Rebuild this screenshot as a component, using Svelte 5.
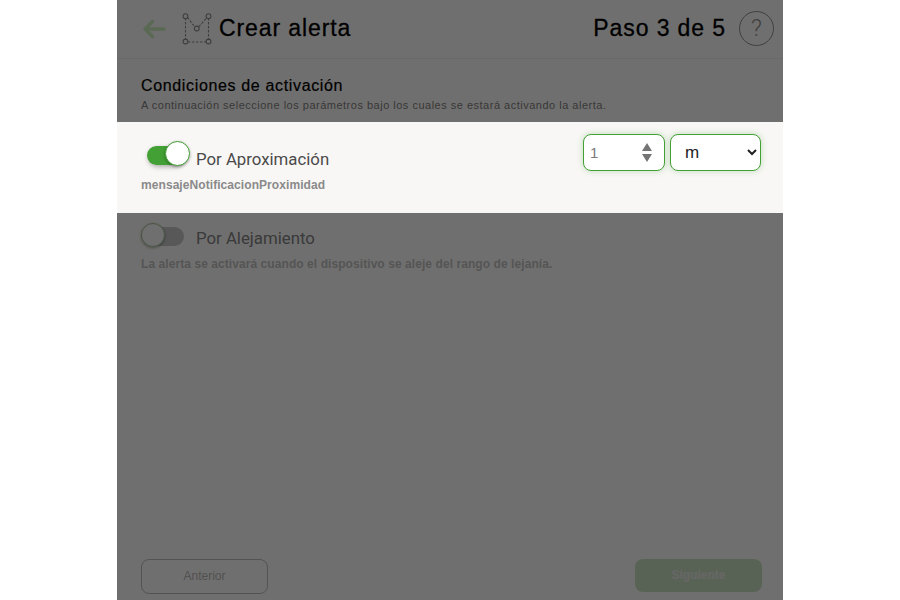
<script lang="ts">
  let distance = $state("1");
  let unit = $state("m");
</script>

<div class="page">
  <div class="screen">
    <header class="topbar">
      <div class="topbar-left">
        <svg class="back" width="26" height="22" viewBox="0 0 26 22" fill="none" stroke="#c6e8ba" stroke-width="3.4" stroke-linecap="round" stroke-linejoin="round">
          <path d="M23 11H4M11.5 3.5 4 11l7.5 7.5" />
        </svg>
        <svg class="logo" width="32" height="32" viewBox="0 0 32 32" fill="none" stroke="#8a8a8a" stroke-width="1.1">
          <path d="M3.5 5v22M26.5 5v22M6 29h18" stroke-dasharray="2.4 1.6" />
          <path d="M5.5 4.5 12.5 13.5M17 13.5 25 4.5" stroke-dasharray="2.4 1.6" />
          <circle cx="3.5" cy="3.2" r="2.4" />
          <circle cx="26.5" cy="3.2" r="2.4" />
          <circle cx="14.8" cy="15.5" r="2.4" />
          <circle cx="3.5" cy="28.5" r="2.4" />
          <circle cx="26.5" cy="28.5" r="2.4" />
        </svg>
        <h1>Crear alerta</h1>
      </div>
      <div class="topbar-right">
        <span class="step">Paso 3 de 5</span>
        <span class="help">?</span>
      </div>
    </header>

    <section class="intro">
      <h2>Condiciones de activación</h2>
      <p>A continuación seleccione los parámetros bajo los cuales se estará activando la alerta.</p>
    </section>

    <section class="option active">
      <div class="option-main">
        <div class="option-title">
          <span class="toggle on"><span class="knob"></span></span>
          <span class="label">Por Aproximación</span>
        </div>
        <p class="hint">mensajeNotificacionProximidad</p>
      </div>
      <div class="controls">
        <div class="number">
          <input type="text" bind:value={distance} />
          <span class="arrows"><i class="up"></i><i class="down"></i></span>
        </div>
        <select bind:value={unit}>
          <option value="m">m</option>
          <option value="km">km</option>
        </select>
      </div>
    </section>

    <section class="option second">
      <div class="option-title">
        <span class="toggle"><span class="knob"></span></span>
        <span class="label">Por Alejamiento</span>
      </div>
      <p class="hint">La alerta se activará cuando el dispositivo se aleje del rango de lejanía.</p>
    </section>

    <footer class="actions">
      <button class="btn prev">Anterior</button>
      <button class="btn next">Siguiente</button>
    </footer>

    <div class="overlay"></div>
  </div>
</div>

<style>
  :global(body) {
    background: #fff;
    font-family: "Liberation Sans", Arial, sans-serif;
  }

  .page {
    display: flex;
    justify-content: center;
  }

  .screen {
    position: relative;
    width: 666px;
    height: 600px;
    display: flex;
    flex-direction: column;
    background: #f8f7f5;
    overflow: hidden;
  }

  .overlay {
    position: absolute;
    inset: 0;
    background: rgba(0, 0, 0, 0.55);
    z-index: 1;
  }

  .topbar {
    height: 59px;
    flex-shrink: 0;
    box-sizing: border-box;
    border-bottom: 1px solid #e8e8e6;
    display: flex;
    justify-content: space-between;
    align-items: center;
    padding: 0 9px 1px 24px;
  }

  .topbar-left,
  .topbar-right {
    display: flex;
    align-items: center;
  }

  .back {
    margin-right: 15px;
  }

  .logo {
    margin-right: 5px;
  }

  h1 {
    margin: 0;
    font-size: 23px;
    font-weight: 400;
    letter-spacing: 0.9px;
    color: #000;
    -webkit-text-stroke: 0.3px #000;
  }

  .step {
    font-size: 23px;
    letter-spacing: 0.9px;
    color: #000;
    -webkit-text-stroke: 0.3px #000;
    margin-right: 13px;
  }

  .help {
    width: 33px;
    height: 33px;
    border: 1.5px solid #8c8c8c;
    border-radius: 50%;
    color: #909090;
    font-family: Roboto, "Liberation Sans", sans-serif;
    font-weight: 300;
    font-size: 24px;
    line-height: 33px;
    text-align: center;
  }

  .intro {
    height: 63px;
    box-sizing: border-box;
    padding: 18px 24px 0;
  }

  .intro h2 {
    margin: 0;
    font-size: 16px;
    font-weight: 400;
    letter-spacing: 0.65px;
    color: #000;
    -webkit-text-stroke: 0.2px #000;
  }

  .intro p {
    margin: 4px 0 0;
    font-size: 11px;
    letter-spacing: 0.5px;
    color: #7c7c7c;
  }

  .option {
    padding: 0 24px;
  }

  .active {
    position: relative;
    z-index: 2;
    height: 91px;
    box-sizing: border-box;
    background: #f8f7f5;
    display: flex;
    justify-content: space-between;
    padding: 12px 22px 0 24px;
  }

  .option-main {
    padding-top: 8px;
  }

  .option-title {
    display: flex;
    align-items: center;
  }

  .toggle {
    position: relative;
    display: block;
    flex-shrink: 0;
    width: 37px;
    height: 19px;
    margin-left: 6px;
    margin-right: 12px;
    border-radius: 10px;
    background: #c4c4c4;
  }

  .toggle.on {
    background: #43a035;
    box-shadow: 1px 2px 5px rgba(0, 0, 0, 0.3);
  }

  .knob {
    position: absolute;
    top: -4px;
    left: -6px;
    width: 24px;
    height: 24px;
    box-sizing: border-box;
    border-radius: 50%;
    background: #f8f7f5;
    border: 1.5px solid #9fc095;
    box-shadow: 0 1px 3px rgba(0, 0, 0, 0.3);
  }

  .on .knob {
    left: auto;
    right: -6px;
    top: -5px;
    width: 25px;
    height: 25px;
    background: #fff;
    border: 1px solid #43a035;
    box-shadow: 0 1px 3px rgba(0, 0, 0, 0.35);
  }

  .label {
    font-family: Roboto, "Liberation Sans", sans-serif;
    font-size: 16.8px;
    color: #4a4a4a;
    margin-top: 7px;
  }

  .second .label {
    color: #808080;
    margin-top: 4px;
  }

  .hint {
    margin: 9px 0 0;
    font-size: 12px;
    font-weight: 700;
    letter-spacing: 0.07px;
    color: #8a8a8a;
  }

  .second {
    padding-top: 11px;
  }

  .second .hint {
    margin-top: 9px;
    color: #bcbcbc;
  }

  .controls {
    display: flex;
    gap: 5px;
    align-self: flex-start;
  }

  .number,
  select {
    height: 37px;
    box-sizing: border-box;
    border: 1px solid #43a035;
    border-radius: 8px;
    background: #fff;
    box-shadow: 0 0 6px rgba(67, 160, 53, 0.3);
  }

  .number {
    width: 82px;
    display: flex;
    align-items: center;
    justify-content: space-between;
    padding: 0 12px 0 6px;
  }

  .number input {
    width: 40px;
    border: 0;
    padding: 0;
    outline: none;
    background: none;
    font-family: inherit;
    font-size: 15px;
    color: #7b7b7b;
  }

  .arrows {
    display: flex;
    flex-direction: column;
    gap: 3px;
  }

  .arrows i {
    display: block;
    width: 0;
    height: 0;
    border-left: 5.5px solid transparent;
    border-right: 5.5px solid transparent;
  }

  .up {
    border-bottom: 8px solid #757575;
  }

  .down {
    border-top: 8px solid #757575;
  }

  select {
    width: 91px;
    padding: 0 0 0 10px;
    font-family: inherit;
    font-size: 17px;
    color: #222;
  }

  .actions {
    margin-top: auto;
    display: flex;
    justify-content: space-between;
    align-items: flex-start;
    padding: 0 21px 6px 24px;
  }

  .btn {
    width: 127px;
    height: 35px;
    box-sizing: border-box;
    border-radius: 8px;
    font-family: inherit;
    font-size: 12px;
    padding: 0 0 2px;
  }

  .prev {
    background: none;
    border: 1px solid #b8b8b8;
    color: #b4b4b4;
  }

  .next {
    background: #c6dcbc;
    border: 0;
    height: 33px;
    color: #e4e4e4;
    font-weight: 700;
  }
</style>
